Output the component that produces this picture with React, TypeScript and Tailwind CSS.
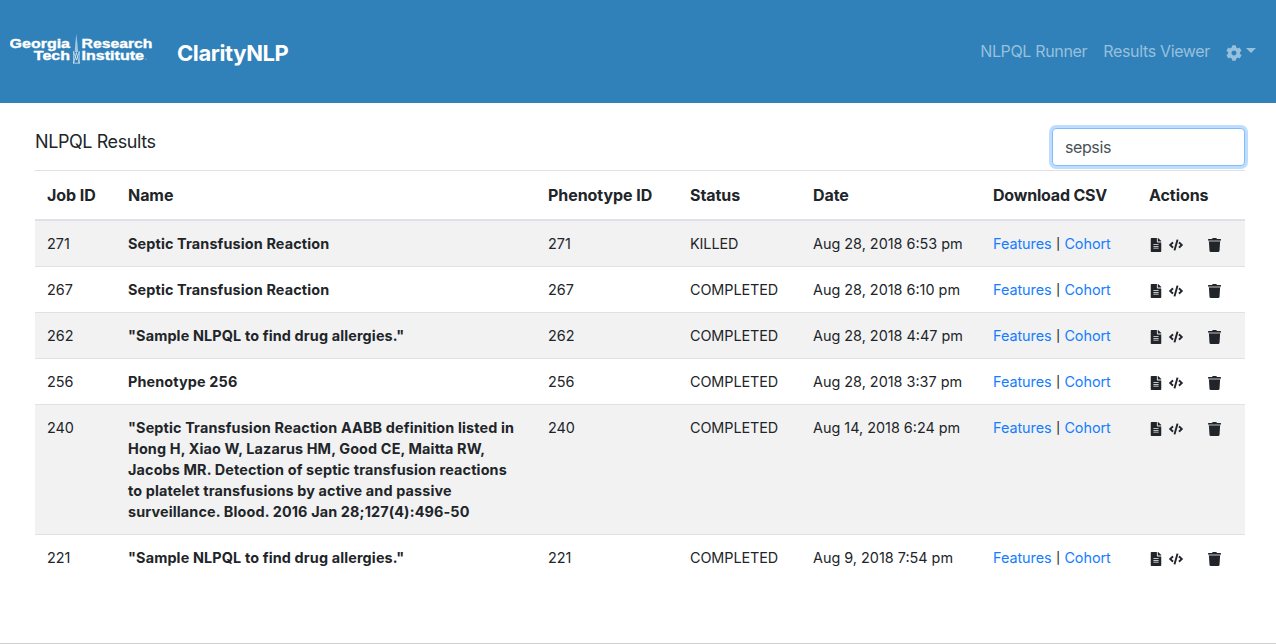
import React from "react";
import { FaCode, FaCog, FaFileAlt } from "react-icons/fa";

type Job = { id: number; name: string; status: string; date: string };

const jobs: Job[] = [
  { id: 271, name: "Septic Transfusion Reaction", status: "KILLED", date: "Aug 28, 2018 6:53 pm" },
  { id: 267, name: "Septic Transfusion Reaction", status: "COMPLETED", date: "Aug 28, 2018 6:10 pm" },
  { id: 262, name: '"Sample NLPQL to find drug allergies."', status: "COMPLETED", date: "Aug 28, 2018 4:47 pm" },
  { id: 256, name: "Phenotype 256", status: "COMPLETED", date: "Aug 28, 2018 3:37 pm" },
  {
    id: 240,
    name: '"Septic Transfusion Reaction AABB definition listed in Hong H, Xiao W, Lazarus HM, Good CE, Maitta RW, Jacobs MR. Detection of septic transfusion reactions to platelet transfusions by active and passive surveillance. Blood. 2016 Jan 28;127(4):496-50',
    status: "COMPLETED",
    date: "Aug 14, 2018 6:24 pm",
  },
  { id: 221, name: '"Sample NLPQL to find drug allergies."', status: "COMPLETED", date: "Aug 9, 2018 7:54 pm" },
];

function Logo() {
  return (
    <svg width="144" height="32" viewBox="0 0 144 32" className="shrink-0" fill="#fff">
      <g fontFamily="'Liberation Sans', Arial, sans-serif" fontWeight="700" fontSize="12.6" stroke="#fff" strokeWidth="0.35">
        <text x="-0.4" y="14.1" textLength="60.4" lengthAdjust="spacingAndGlyphs">Georgia</text>
        <text x="23.800" y="25.800" textLength="36.2" lengthAdjust="spacingAndGlyphs">Tech</text>
        <text x="71.600" y="14.1" textLength="70.8" lengthAdjust="spacingAndGlyphs">Research</text>
        <text x="71.600" y="25.800" textLength="62.4" lengthAdjust="spacingAndGlyphs">Institute</text>
      </g>
      <path d="M66.3 0 65.3 9 64.700 18h3.400L67.400 9z" opacity="0.55" />
      <path d="M63.600 17v12.300M69.200 17v12.300M63 29.200h6.800M63.700 29l2.700-10.500L69.100 29M63.700 18l2.700 8 2.700-8" stroke="#fff" strokeWidth="0.8" fill="none" opacity="0.75" />
      <circle cx="136" cy="25.2" r="0.6" opacity="0.5" />
    </svg>
  );
}

function TrashIcon() {
  return (
    <svg width="13" height="14" viewBox="0 0 13 14" className="ml-[25px]" fill="currentColor">
      <path d="M0 1.400Q0 1 .4 1H4l.5-.8Q4.600 0 5 0h3q.4 0 .5.2L9 1h3.600q.4 0 .4.4v1.100H0z" />
      <path d="M.9 3.500h11.200l-.6 9.300q-.1 1.200-1.300 1.200H2.800q-1.200 0-1.300-1.200z" />
      <path d="M.6 2.500h11.800v1H.6z" opacity="0.5" />
    </svg>
  );
}

function Header() {
  return (
    <header className="flex h-[103px] items-start bg-[#3081b9] pr-5 pl-[10px]">
      <div className="pt-[34px]">
        <Logo />
      </div>
      <span className="ml-[23px] pt-[37px] text-[22px] leading-8 font-bold tracking-[-0.4px] text-white">ClarityNLP</span>
      <nav className="ml-auto flex items-center gap-4 pt-[39px] text-base leading-6 tracking-[-0.34px] text-[#97c0dc]">
        <a>NLPQL Runner</a>
        <a>Results Viewer</a>
        <a className="flex items-center gap-[4px]">
          <FaCog className="mt-[3px] size-4" />
          <svg width="10" height="5" viewBox="0 0 10 5" className="-mt-px">
            <path d="M0 0h10L5 5z" fill="currentColor" />
          </svg>
        </a>
      </nav>
    </header>
  );
}

export default function App() {
  return (
    <div className="flex h-[644px] flex-col bg-white font-['Inter',sans-serif] text-[#212529]">
      <Header />
      <main className="flex-1 px-[35px] pr-[31px]">
        <div className="flex h-[67px] items-start justify-between">
          <h1 className="pt-[25px] text-lg leading-7 tracking-[-0.42px]">NLPQL Results</h1>
          <input
            defaultValue="sepsis"
            aria-label="Filter results"
            className="mt-[25px] h-[38px] w-[193px] rounded border border-[#80bdff] bg-white px-3 text-base tracking-[-0.4px] text-[#495057] shadow-[0_0_0_3px_#bfdeff] outline-none"
          />
        </div>
        <table className="w-[1210px] table-fixed border-separate border-spacing-0 text-left text-[14.4px] leading-[21px]">
          <colgroup>
            <col className="w-[81px]" />
            <col className="w-[420px]" />
            <col className="w-[142px]" />
            <col className="w-[123px]" />
            <col className="w-[180px]" />
            <col className="w-[156px]" />
            <col className="w-[108px]" />
          </colgroup>
          <thead>
            <tr className="text-base leading-6 tracking-[-0.06px] *:border-t *:border-b-2 *:border-[#dee2e6] *:px-3 *:py-3 *:font-bold">
              <th>Job ID</th>
              <th>Name</th>
              <th>Phenotype ID</th>
              <th>Status</th>
              <th>Date</th>
              <th className="tracking-[-0.2px]">Download CSV</th>
              <th>Actions</th>
            </tr>
          </thead>
          <tbody>
            {jobs.map((job) => (
              <tr
                key={job.id}
                className="align-top odd:bg-[#f2f2f2] *:border-t *:border-[#dee2e6] *:px-3 *:py-3 first:*:border-t-0"
              >
                <td>{job.id}</td>
                <td className="font-bold tracking-[0.14px]">
                  <div className="max-w-[390px]">{job.name}</div>
                </td>
                <td>{job.id}</td>
                <td className="tracking-[-0.08px]">{job.status}</td>
                <td className="whitespace-nowrap">{job.date}</td>
                <td className="whitespace-nowrap tracking-[-0.04px]">
                  <a className="text-[#157dff]">Features</a> <span className="inline-block scale-y-[0.8]">|</span>{" "}
                  <a className="text-[#157dff]">Cohort</a>
                </td>
                <td>
                  <div className="flex h-[21px] items-center pt-0.5">
                    <FaFileAlt className="size-[14px]" />
                    <FaCode className="ml-[6px] size-[14px]" />
                    <TrashIcon />
                  </div>
                </td>
              </tr>
            ))}
          </tbody>
        </table>
      </main>
      <div className="h-px bg-[#cfcfcf]" />
    </div>
  );
}
